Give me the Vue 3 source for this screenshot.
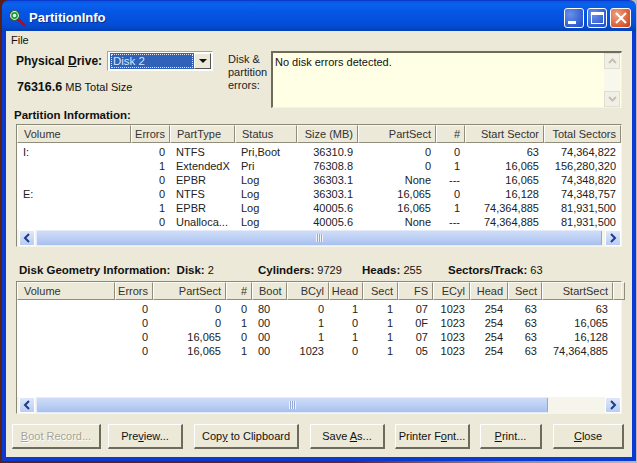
<script setup>
const partCols = [
  { t: 'Volume', w: 114, a: 'l' }, { t: 'Errors', w: 39, a: 'r' }, { t: 'PartType', w: 65, a: 'l' },
  { t: 'Status', w: 62, a: 'l' }, { t: 'Size (MB)', w: 61, a: 'r' }, { t: 'PartSect', w: 78, a: 'r' },
  { t: '#', w: 29, a: 'r' }, { t: 'Start Sector', w: 79, a: 'r' }, { t: 'Total Sectors', w: 77, a: 'r' }
]
const partRows = [
  ['I:', '0', 'NTFS', 'Pri,Boot', '36310.9', '0', '0', '63', '74,364,822'],
  ['', '1', 'ExtendedX', 'Pri', '76308.8', '0', '1', '16,065', '156,280,320'],
  ['', '0', 'EPBR', 'Log', '36303.1', 'None', '---', '16,065', '74,348,820'],
  ['E:', '0', 'NTFS', 'Log', '36303.1', '16,065', '0', '16,128', '74,348,757'],
  ['', '1', 'EPBR', 'Log', '40005.6', '16,065', '1', '74,364,885', '81,931,500'],
  ['', '0', 'Unalloca...', 'Log', '40005.6', 'None', '---', '74,364,885', '81,931,500']
]
const geoCols = [
  { t: 'Volume', w: 98, a: 'l' }, { t: 'Errors', w: 38, a: 'r' }, { t: 'PartSect', w: 73, a: 'r' },
  { t: '#', w: 26, a: 'r' }, { t: 'Boot', w: 35, a: 'l' }, { t: 'BCyl', w: 42, a: 'r' },
  { t: 'Head', w: 34, a: 'r' }, { t: 'Sect', w: 35, a: 'r' }, { t: 'FS', w: 35, a: 'r' },
  { t: 'ECyl', w: 37, a: 'r' }, { t: 'Head', w: 38, a: 'r' }, { t: 'Sect', w: 34, a: 'r' },
  { t: 'StartSect', w: 71, a: 'r' }, { t: '', w: 8, a: 'l' }
]
const geoRows = [
  ['', '0', '0', '0', '80', '0', '1', '1', '07', '1023', '254', '63', '63', ''],
  ['', '0', '0', '1', '00', '1', '0', '1', '0F', '1023', '254', '63', '16,065', ''],
  ['', '0', '16,065', '0', '00', '1', '1', '1', '07', '1023', '254', '63', '16,128', ''],
  ['', '0', '16,065', '1', '00', '1023', '0', '1', '05', '1023', '254', '63', '74,364,885', '']
]
const template = (cols) => ({ gridTemplateColumns: cols.map((c) => c.w + 'px').join(' ') })
</script>

<template>
  <div class="window">
    <header class="titlebar">
      <svg class="appicon" width="18" height="18" viewBox="0 0 18 18">
        <path d="M10 10l6 6" stroke="#a01030" stroke-width="3" stroke-linecap="round" />
        <circle cx="6.5" cy="6.5" r="5" fill="#e8f4e8" stroke="#405040" stroke-width="1.2" />
        <circle cx="6.5" cy="6.5" r="2.6" fill="none" stroke="#10a040" stroke-width="1.6" />
      </svg>
      <span class="title">PartitionInfo</span>
      <div class="controls">
        <button class="ctl"><span class="min"></span></button>
        <button class="ctl"><span class="max"></span></button>
        <button class="ctl close">
          <svg width="14" height="14" viewBox="0 0 14 14"><path d="M2 2l10 10M12 2L2 12" stroke="#fff" stroke-width="2.2" /></svg>
        </button>
      </div>
    </header>

    <div class="client">
      <div class="menu">File</div>

      <section class="top">
        <div class="drive">
          <div class="driveline">
            <span class="bold">Physical <u>D</u>rive:</span>
            <div class="combo">
              <span class="combotext"><span>Disk 2</span></span>
              <span class="combobtn"><i></i></span>
            </div>
          </div>
          <div class="total"><span class="bold">76316.6</span> MB Total Size</div>
        </div>
        <div class="errlabel">Disk &amp;<br />partition<br />errors:</div>
        <div class="errbox">
          <div class="errtext">No disk errors detected.</div>
          <div class="vscroll">
            <span class="vbtn"><svg width="9" height="6" viewBox="0 0 9 6"><path d="M1 5l3.5-3.5L8 5" fill="none" stroke="#c4c2b4" stroke-width="2" /></svg></span>
            <span class="vbtn"><svg width="9" height="6" viewBox="0 0 9 6"><path d="M1 1l3.5 3.5L8 1" fill="none" stroke="#c4c2b4" stroke-width="2" /></svg></span>
          </div>
        </div>
      </section>

      <h2 class="sect">Partition Information:</h2>
      <div class="list part">
        <div class="head" :style="template(partCols)">
          <span v-for="(c, i) in partCols" :key="i" class="hcell" :class="c.a">{{ c.t }}</span>
        </div>
        <div class="rows">
          <div v-for="(r, i) in partRows" :key="i" class="row" :style="template(partCols)">
            <span v-for="(v, j) in r" :key="j" class="cell" :class="partCols[j].a">{{ v }}</span>
          </div>
        </div>
        <div class="hscroll">
          <span class="arrow"><svg width="8" height="10" viewBox="0 0 8 10"><path d="M6 1L2 5l4 4" fill="none" stroke="#1c3c8c" stroke-width="2" /></svg></span>
          <div class="track">
            <div class="thumb full"><span class="grip"></span></div>
          </div>
          <span class="arrow"><svg width="8" height="10" viewBox="0 0 8 10"><path d="M2 1l4 4-4 4" fill="none" stroke="#1c3c8c" stroke-width="2" /></svg></span>
        </div>
      </div>

      <div class="geoline">
        <span class="g1"><b>Disk Geometry Information:</b>&nbsp; <b>Disk:</b> 2</span>
        <span class="g2"><b>Cylinders:</b> 9729</span>
        <span class="g3"><b>Heads:</b> 255</span>
        <span class="g4"><b>Sectors/Track:</b> 63</span>
      </div>
      <div class="list geo">
        <div class="head" :style="template(geoCols)">
          <span v-for="(c, i) in geoCols" :key="i" class="hcell" :class="c.a">{{ c.t }}</span>
        </div>
        <div class="rows">
          <div v-for="(r, i) in geoRows" :key="i" class="row" :style="template(geoCols)">
            <span v-for="(v, j) in r" :key="j" class="cell" :class="geoCols[j].a">{{ v }}</span>
          </div>
        </div>
        <div class="hscroll">
          <span class="arrow"><svg width="8" height="10" viewBox="0 0 8 10"><path d="M6 1L2 5l4 4" fill="none" stroke="#1c3c8c" stroke-width="2" /></svg></span>
          <div class="track">
            <div class="thumb part-thumb"><span class="grip"></span></div>
          </div>
          <span class="arrow"><svg width="8" height="10" viewBox="0 0 8 10"><path d="M2 1l4 4-4 4" fill="none" stroke="#1c3c8c" stroke-width="2" /></svg></span>
        </div>
      </div>

      <footer class="buttons">
        <button class="btn disabled b1"><u>B</u>oot Record...</button>
        <button class="btn b2">Pre<u>v</u>iew...</button>
        <button class="btn b3">Cop<u>y</u> to Clipboard</button>
        <button class="btn b4">Save <u>A</u>s...</button>
        <button class="btn b5">Printer F<u>o</u>nt...</button>
        <button class="btn b6"><u>P</u>rint...</button>
        <button class="btn b7"><u>C</u>lose</button>
      </footer>
    </div>
  </div>
</template>

<style>
html, body { margin: 0; height: 463px; overflow: hidden; background: linear-gradient(90deg, #5a2018 0%, #6a2030 55%, #8a8a94 80%, #b8b8c4 100%); }
</style>

<style scoped>
* { box-sizing: border-box; }
.window {
  width: 634px; height: 461px; margin-left: 2px; padding-top: 1px;
  display: flex; flex-direction: column;
  font: 11px/14px "Liberation Sans", Arial, sans-serif; color: #111;
  border-radius: 7px 7px 0 0; overflow: hidden; background: #0a3ad0;
}
.titlebar {
  height: 30px; flex: none; display: flex; align-items: center; padding: 4px 5px 0 6px;
  background: linear-gradient(180deg, #0a56dc 0%, #0a62ee 12%, #0556e4 35%, #0450dc 70%, #0348c8 90%, #0240b4 100%);
}
.appicon { flex: none; }
.title { margin-left: 3px; color: #fff; font-weight: 700; font-size: 13px; text-shadow: 1px 1px 0 #0a2e90; }
.controls { margin-left: auto; display: flex; gap: 3px; }
.ctl {
  width: 20px; height: 20px; padding: 0; display: flex; align-items: center; justify-content: center; position: relative;
  border: 1px solid #fff; border-radius: 3px; background: radial-gradient(circle at 30% 30%, #6a90e8, #2c5ad0 75%, #2450c0);
}
.ctl.close { width: 21px; background: radial-gradient(circle at 30% 30%, #f0a080, #d85a30 70%, #c04020); }
.min { width: 8px; height: 3px; background: #fff; margin-top: 9px; margin-right: 4px; }
.max { width: 13px; height: 12px; border: 1px solid #fff; border-top-width: 3px; }
.client {
  flex: 1; min-height: 0; margin: 0 4px 4px 4px; background: #ece9d8;
  display: flex; flex-direction: column; padding: 0;
}
.menu { height: 19px; padding: 2px 0 0 5px; }
.top { height: 58px; display: flex; padding: 1px 0 0 10px; }
.bold, b { font-weight: 700; font-size: 11.5px; }
.drive { width: 212px; flex: none; }
.driveline { display: flex; align-items: center; height: 20px; }
.driveline .bold { width: 91px; flex: none; font-size: 12px; }
.combo {
  width: 106px; height: 20px; display: flex; padding: 1px 1px 1px 2px;
  background: #fff; border: 1px solid #a8a598; border-right-color: #fff; border-bottom-color: #fff;
}
.combotext { flex: 1; background: #2f62b8; color: #d8e4f8; padding: 1px; }
.combotext span { display: block; height: 100%; border: 1px dotted #dfe6f4; padding-left: 1px; line-height: 13px; font-size: 11.5px; }
.combobtn {
  width: 17px; background: #ece9d8; display: flex; align-items: center; justify-content: center;
  border: 1px solid #fff; border-right-color: #555; border-bottom-color: #555;
}
.combobtn i { width: 0; height: 0; border: 4px solid transparent; border-top: 4px solid #111; border-bottom: 0; }
.total { margin-top: 9px; margin-left: 1px; }
.total .bold { font-size: 12.5px; }
.errlabel { width: 43px; flex: none; line-height: 13px; padding-top: 2px; color: #222; }
.errbox {
  width: 351px; height: 57px; flex: none; display: flex; background: #ffffe6;
  border: 1px solid #f4f2e6; border-top: 2px solid #6e6b58; border-left: 2px solid #6e6b58;
}
.errtext { flex: 1; padding: 2px 0 0 2px; }
.vscroll { width: 16px; display: flex; flex-direction: column; justify-content: space-between; background: #f8f7ee; margin-right: 1px; }
.vbtn { height: 16px; display: flex; align-items: center; justify-content: center; background: #f2f0e6; border: 1px solid #e0ded0; }
.sect { margin: 0; padding-left: 8px; font-size: 11.5px; line-height: 14px; font-weight: 700; height: 16px; }
.list {
  margin-left: 10px; width: 606px; display: flex; flex-direction: column; background: #fff;
  border: 1px solid #8a8878; border-right-color: #f8f6ea; border-bottom-color: #f8f6ea;
}
.list.part { height: 123px; }
.list.geo { height: 133px; }
.head { display: grid; height: 18px; flex: none; background: #ece9d8; }
.hcell {
  padding: 1px 4px 0 6px; white-space: nowrap; overflow: hidden; line-height: 15px; color: #333;
  border: 1px solid #fbfaf2; border-left-color: #fff; border-right-color: #8f8d7e; border-bottom-color: #8f8d7e;
}
.hcell.r { padding-left: 1px; }
.l { text-align: left; }
.r { text-align: right; }
.rows { flex: 1; min-height: 0; padding-top: 2px; }
.row { display: grid; height: 14px; }
.cell { padding: 0 5px 0 6px; white-space: nowrap; overflow: hidden; line-height: 14px; color: #222; }
.hscroll { height: 16px; flex: none; display: flex; background: #f6f5ec; padding: 0 0 0 2px; }
.arrow {
  width: 16px; flex: none; display: flex; align-items: center; justify-content: center;
  background: linear-gradient(180deg, #dfe8fa, #b8cdf2); border: 1px solid #fff;
}
.track { flex: 1; display: flex; padding: 0 3px 0 1px; }
.thumb {
  display: flex; align-items: center; justify-content: center;
  background: linear-gradient(180deg, #cfdcf6, #bcd0f4 50%, #a8c0ee); border: 1px solid #e4ecfb; border-right-color: #8ea8d8; border-radius: 2px;
}
.thumb.full { width: 100%; }
.thumb.part-thumb { width: 512px; }
.grip { width: 7px; height: 8px; background: repeating-linear-gradient(90deg, #eef3fc 0 1px, #8fa8d8 1px 2px); }
.geoline { position: relative; height: 20px; margin-top: 14px; }
.g1, .g2, .g3, .g4 { position: absolute; top: 2px; white-space: nowrap; }
.g1 { left: 13px; }
.g2 { left: 252px; }
.g3 { left: 356px; }
.g4 { left: 442px; }
.buttons { display: flex; align-items: flex-start; padding: 10px 0 0 6px; }
.btn {
  height: 25px; flex: none; background: #ece9d8; font: inherit; color: #111; padding: 0;
  border: 1px solid #fff; border-right: 2px solid #6d6b5e; border-bottom: 2px solid #6d6b5e;
}
.btn.disabled { color: #a5a396; text-shadow: 1px 1px 0 #fff; }
.b1 { width: 89px; }
.b2 { width: 75px; margin-left: 7px; }
.b3 { width: 105px; margin-left: 11px; }
.b4 { width: 75px; margin-left: 11px; }
.b5 { width: 75px; margin-left: 10px; }
.b6 { width: 62px; margin-left: 10px; }
.b7 { width: 71px; margin-left: 11px; }
</style>
